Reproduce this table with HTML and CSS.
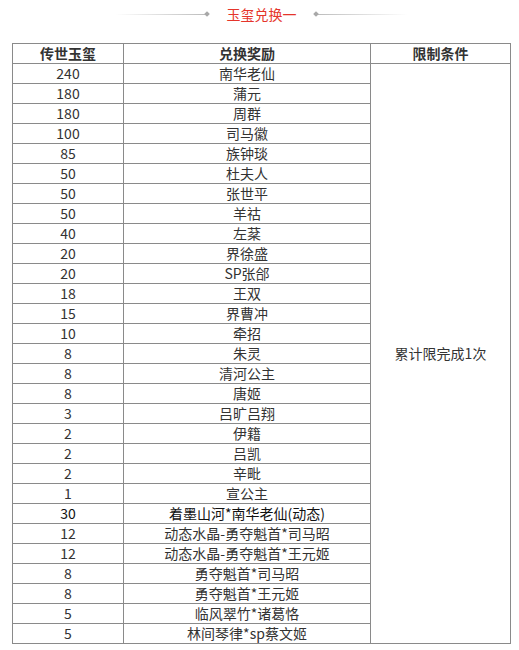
FILE: index.html
```html
<!DOCTYPE html>
<html>
<head>
<meta charset="utf-8">
<link rel="stylesheet" href="styles.css">
</head>
<body>
<div class="page">
  <div class="title">
    <span class="line line-left"></span>
    <span class="dot"></span>
    <span class="title-text">玉玺兑换一</span>
    <span class="dot"></span>
    <span class="line line-right"></span>
  </div>
  <table class="tbl">
    <colgroup><col class="c1"><col class="c2"><col class="c3"></colgroup>
    <thead>
      <tr><th>传世玉玺</th><th>兑换奖励</th><th>限制条件</th></tr>
    </thead>
    <tbody>
      <tr><td>240</td><td>南华老仙</td><td rowspan="29" class="limit">累计限完成1次</td></tr>
      <tr><td>180</td><td>蒲元</td></tr>
      <tr><td>180</td><td>周群</td></tr>
      <tr><td>100</td><td>司马徽</td></tr>
      <tr><td>85</td><td>族钟琰</td></tr>
      <tr><td>50</td><td>杜夫人</td></tr>
      <tr><td>50</td><td>张世平</td></tr>
      <tr><td>50</td><td>羊祜</td></tr>
      <tr><td>40</td><td>左棻</td></tr>
      <tr><td>20</td><td>界徐盛</td></tr>
      <tr><td>20</td><td>SP张郃</td></tr>
      <tr><td>18</td><td>王双</td></tr>
      <tr><td>15</td><td>界曹冲</td></tr>
      <tr><td>10</td><td>牵招</td></tr>
      <tr><td>8</td><td>朱灵</td></tr>
      <tr><td>8</td><td>清河公主</td></tr>
      <tr><td>8</td><td>唐姬</td></tr>
      <tr><td>3</td><td>吕旷吕翔</td></tr>
      <tr><td>2</td><td>伊籍</td></tr>
      <tr><td>2</td><td>吕凯</td></tr>
      <tr><td>2</td><td>辛毗</td></tr>
      <tr><td>1</td><td>宣公主</td></tr>
      <tr class="dark"><td>30</td><td>着墨山河*南华老仙(动态)</td></tr>
      <tr><td>12</td><td>动态水晶-勇夺魁首*司马昭</td></tr>
      <tr><td>12</td><td>动态水晶-勇夺魁首*王元姬</td></tr>
      <tr><td>8</td><td>勇夺魁首*司马昭</td></tr>
      <tr><td>8</td><td>勇夺魁首*王元姬</td></tr>
      <tr><td>5</td><td>临风翠竹*诸葛恪</td></tr>
      <tr><td>5</td><td>林间琴律*sp蔡文姬</td></tr>
    </tbody>
  </table>
</div>
</body>
</html>
```
FILE: styles.css
```css
html, body {
  margin: 0;
  padding: 0;
  background: #fff;
}
body {
  font-family: "Microsoft YaHei", "Noto Sans CJK SC", "Noto Sans", sans-serif;
  color: #333;
}
.page {
  padding: 4px 0 0 12px;
}
.title {
  display: flex;
  align-items: center;
  justify-content: center;
  height: 20px;
  width: 498px;
  margin-bottom: 19px;
}
.line {
  display: block;
  width: 90px;
  height: 1px;
}
.line-left {
  background: linear-gradient(to right, rgba(190,190,190,0), #bdbdbd);
}
.line-right {
  background: linear-gradient(to left, rgba(190,190,190,0), #bdbdbd);
}
.dot {
  display: block;
  width: 4px;
  height: 4px;
  background: #a8a8a8;
  transform: rotate(45deg);
}
.title-text {
  color: #e5352b;
  font-size: 14px;
  line-height: 20px;
  margin: 0 17px 0 18px;
}
.tbl {
  border-collapse: collapse;
  width: 498px;
  table-layout: fixed;
  font-size: 14px;
}
.c1 { width: 111px; }
.c2 { width: 247px; }
.c3 { width: 140px; }
.tbl th, .tbl td {
  border: 1px solid #8a8a8a;
  padding: 0;
  height: 19px;
  line-height: 19px;
  text-align: center;
  white-space: nowrap;
}
.tbl th {
  font-weight: bold;
  color: #333;
}
.tbl td.limit {
  vertical-align: middle;
}
.tbl tr.dark td {
  color: #111;
}
```
